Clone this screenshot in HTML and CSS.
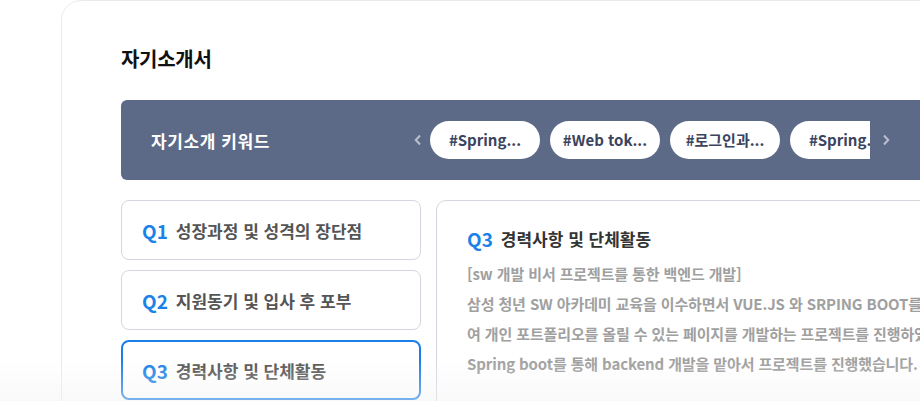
FILE: index.html
```html
<!DOCTYPE html>
<html lang="ko">
<head>
  <meta charset="UTF-8" />
  <meta name="viewport" content="width=device-width, initial-scale=1.0" />
  <title>자기소개서</title>
  <link rel="stylesheet" href="styles.css">
</head>
<body>
  <main class="resume-card">
    <h2 class="resume-title">자기소개서</h2>

    <section class="keyword-bar">
      <h3 class="keyword-label">자기소개 키워드</h3>
      <div class="keyword-slider">
        <button class="slide-btn prev" aria-label="이전">
          <svg width="10" height="12" viewBox="0 0 10 12"><polyline points="7,1.5 2.8,6 7,10.5" fill="none" stroke="#b9c0ce" stroke-width="2" /></svg>
        </button>
        <div class="keyword-track">
          <span class="keyword-chip">#Spring...</span>
          <span class="keyword-chip">#Web tok...</span>
          <span class="keyword-chip">#로그인과...</span>
          <span class="keyword-chip">#Spring...</span>
        </div>
        <button class="slide-btn next" aria-label="다음">
          <svg width="10" height="12" viewBox="0 0 10 12"><polyline points="3,1.5 7.2,6 3,10.5" fill="none" stroke="#b9c0ce" stroke-width="2" /></svg>
        </button>
      </div>
    </section>

    <div class="qa-layout">
      <ul class="question-list">
        <li class="question-item"><span class="q-no">Q1</span>성장과정 및 성격의 장단점</li>
        <li class="question-item"><span class="q-no">Q2</span>지원동기 및 입사 후 포부</li>
        <li class="question-item active"><span class="q-no">Q3</span>경력사항 및 단체활동</li>
      </ul>

      <article class="answer-panel">
        <h4 class="answer-title"><span class="q-no">Q3</span>경력사항 및 단체활동</h4>
        <p class="answer-text">
          [sw 개발 비서 프로젝트를 통한 백엔드 개발]<br>
          삼성 청년 SW 아카데미 교육을 이수하면서 VUE.JS 와 SRPING BOOT를 활용하<br>
          여 개인 포트폴리오를 올릴 수 있는 페이지를 개발하는 프로젝트를 진행하였고<br>
          Spring boot를 통해 backend 개발을 맡아서 프로젝트를 진행했습니다.
        </p>
      </article>
    </div>
  </main>

  <div class="bottom-fade"></div>
</body>
</html>
```

FILE: styles.css
```css
html, body {
  margin: 0;
  height: 100%;
  overflow: hidden;
  background: #fff;
  font-family: "Noto Sans CJK KR", "Noto Sans", sans-serif;
}

.resume-card {
  margin-left: 61px;
  width: 1000px;
  min-height: 600px;
  padding: 43px 0 0 59px;
  border: 1px solid #ebebeb;
  border-radius: 20px;
  box-sizing: border-box;
}

.resume-title {
  margin: 0 0 26px;
  font-size: 20px;
  line-height: 30px;
  font-weight: 700;
  color: #111;
  letter-spacing: -0.3px;
}

/* keyword bar */
.keyword-bar {
  display: flex;
  align-items: center;
  height: 80px;
  padding-left: 30px;
  background: #5d6a87;
  border-radius: 6px;
}
.keyword-label {
  flex: 0 0 259px;
  margin: 0;
  font-size: 17px;
  font-weight: 700;
  color: #fff;
  letter-spacing: 0.6px;
}
.keyword-slider {
  display: flex;
  align-items: center;
}
.slide-btn {
  display: flex;
  align-items: center;
  width: 20px;
  height: 38px;
  padding: 0 0 0 3px;
  border: 0;
  background: none;
  box-sizing: border-box;
}
.slide-btn.next { padding-left: 11px; width: 30px; }
.keyword-track {
  display: flex;
  gap: 10px;
  width: 440px;
  overflow: hidden;
}
.keyword-chip {
  flex: 0 0 110px;
  height: 38px;
  line-height: 38px;
  border-radius: 19px;
  background: #fff;
  text-align: center;
  font-size: 15px;
  font-weight: 700;
  color: #3a4360;
}

/* questions */
.qa-layout {
  display: flex;
  gap: 15px;
  margin-top: 20px;
}
.question-list {
  display: flex;
  flex-direction: column;
  gap: 10px;
  width: 300px;
  margin: 0;
  padding: 0;
  list-style: none;
}
.question-item {
  display: flex;
  align-items: center;
  height: 60px;
  padding-left: 20px;
  border: 1px solid #d6d6e0;
  border-radius: 8px;
  box-sizing: border-box;
  font-size: 17px;
  font-weight: 700;
  color: #555;
}
.question-item.active {
  border: 2px solid #1a7fe8;
  padding-left: 19px;
}
.q-no {
  margin-right: 8px;
  font-size: 19px;
  font-weight: 700;
  color: #1a82e8;
}

.answer-panel {
  flex: 1;
  height: 260px;
  padding: 25px 30px 0;
  border: 1px solid #d6d6e0;
  border-radius: 10px;
}
.answer-title {
  margin: 0;
  display: flex;
  align-items: center;
  line-height: 26px;
  font-size: 17px;
  font-weight: 700;
  color: #333;
}
.answer-text {
  margin: 7px 0 0;
  font-size: 15px;
  line-height: 30px;
  font-weight: 700;
  color: #a0a0a0;
  letter-spacing: -0.12px;
  white-space: nowrap;
}

.bottom-fade {
  position: fixed;
  left: 0;
  right: 0;
  bottom: 0;
  height: 42px;
  background: linear-gradient(rgba(242, 242, 244, 0), rgba(242, 242, 244, 0.45));
  pointer-events: none;
}
```
